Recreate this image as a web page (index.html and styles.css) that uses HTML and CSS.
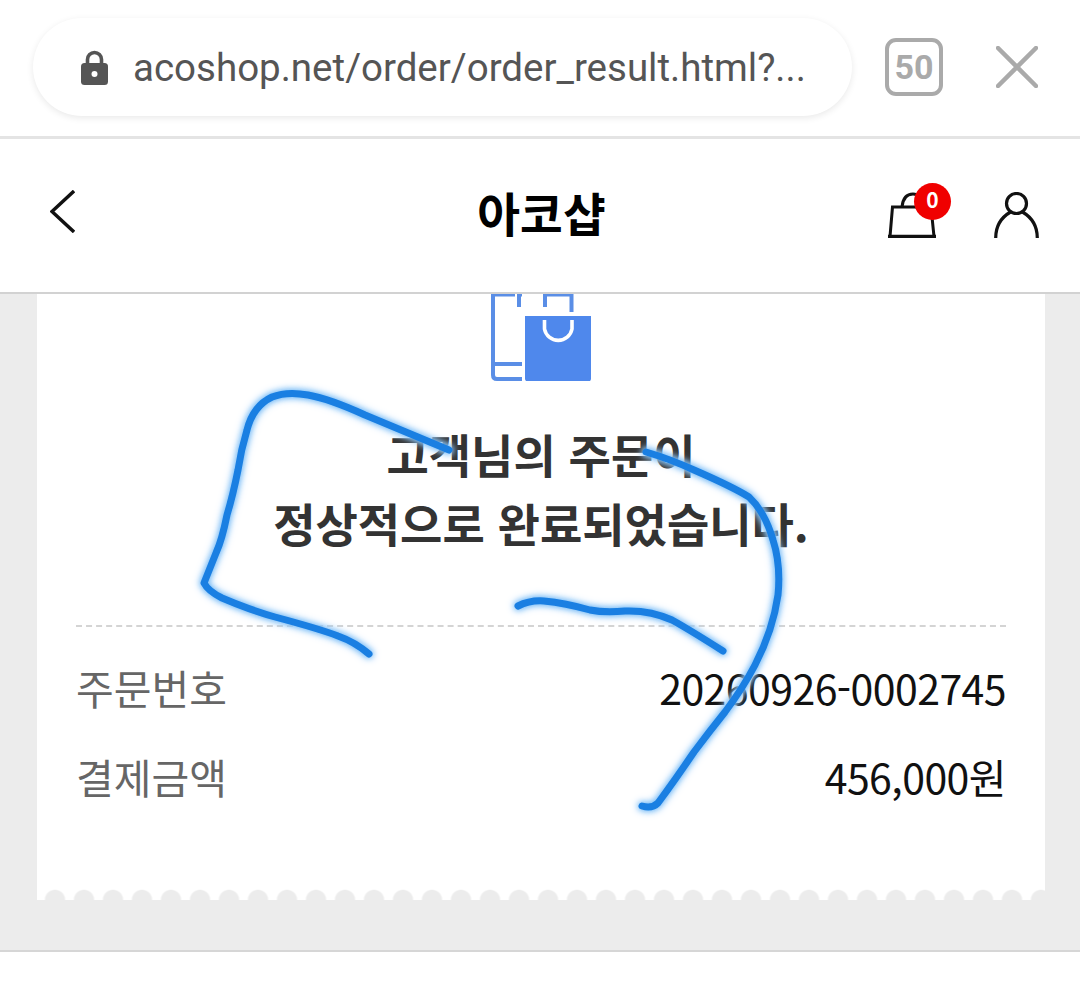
FILE: index.html
```html
<!DOCTYPE html>
<html lang="ko">
<head>
<meta charset="utf-8">
<title>아코샵</title>
<link rel="stylesheet" href="styles.css">
</head>
<body>
<div class="browser">
  <div class="url-pill">
    <svg class="lock" viewBox="0 0 27 35"><path d="M6.500 14V9.500a7 7 0 0 1 14 0V14" fill="none" stroke="#555" stroke-width="3.600"/><rect x="0" y="13" width="27" height="22" rx="3.500" fill="#555"/><circle cx="13.500" cy="24" r="3" fill="#fff"/></svg>
    <span class="url">acoshop.net/order/order_result.html?...</span>
  </div>
  <div class="tabs">50</div>
  <svg class="close" viewBox="0 0 42 42"><path d="M2 2 40 40M40 2 2 40" stroke="#aaa" stroke-width="4.500" stroke-linecap="round" fill="none"/></svg>
</div>
<header class="app-header">
  <svg class="back" viewBox="0 0 25 43"><path d="M24 1 2 21.500 24 42" fill="none" stroke="#111" stroke-width="3.400"/></svg>
  <h1 class="title">아코샵</h1>
  <div class="header-icons">
    <div class="cart">
      <svg class="cart-icon" viewBox="0 0 48 46"><path d="M2 44.500 4.500 15H43L46 44.500Z" fill="none" stroke="#111" stroke-width="3"/><path d="M0 44.500H48" stroke="#111" stroke-width="3.600"/><path d="M14 15C15 5 20 2 25 2 31 2 33 6 33 15" fill="none" stroke="#111" stroke-width="3"/></svg>
      <span class="badge">0</span>
    </div>
    <svg class="user" viewBox="0 0 45 46"><circle cx="22.500" cy="11.500" r="10" fill="none" stroke="#111" stroke-width="3.200"/><path d="M1.700 46C1.700 33 8 25 16.500 20M43.300 46C43.300 33 37 25 28.500 20" fill="none" stroke="#111" stroke-width="3.200"/></svg>
  </div>
</header>
<main class="stage">
  <section class="card">
    <svg class="order-icon" viewBox="0 0 101 87">
      <path d="M2 0V81Q2 85 6 85H31M2 70H31" fill="none" stroke="#5a8ee6" stroke-width="4"/>
      <path d="M0 1H24M26 1H31M52 1H82" fill="none" stroke="#5a8ee6" stroke-width="3"/>
      <path d="M28 0V13M54 0V13M80.500 0V18" fill="none" stroke="#5a8ee6" stroke-width="4"/>
      <path d="M34 22H100V84.500Q100 87.500 97 87.500H37Q34 87.500 34 84.500Z" fill="#4f88ec"/>
      <path d="M53.500 26V35A14 14 0 0 0 81 35V26" fill="none" stroke="#fff" stroke-width="3.600"/>
    </svg>
    <h2 class="message">고객님의 주문이<br>정상적으로 완료되었습니다.</h2>
    <dl class="details">
      <div class="row"><dt>주문번호</dt><dd>20260926-0002745</dd></div>
      <div class="row"><dt>결제금액</dt><dd>456,000원</dd></div>
    </dl>
    <div class="scallops"></div>
  </section>
</main>
<div class="footer"></div>
<svg class="scribble" viewBox="0 0 1080 1002">
  <path d="M449 450L365 415Q330 399 308 395Q287 391 272 397Q253 406 247 430Q241 450 238 470Q233 495 227 515Q222 540 216 553L204 583Q208 591 222 598Q250 610 275 617Q320 629 338 636Q355 642 369 654"/>
  <path d="M646 452Q670 459 694 470Q733 487 749 497Q765 512 773 540Q781 565 778 595Q773 630 755 665Q743 688 725 712Q709 732 694 752Q675 780 658 803Q652 809 642 806"/>
  <path d="M518 606Q530 600 544 601Q565 603 590 610Q605 613 625 611Q650 610 672 620Q690 630 723 651"/>
</svg>
</body>
</html>
```

FILE: styles.css
```css
* { box-sizing: border-box; }
html, body { margin: 0; padding: 0; }
body {
  width: 1080px;
  height: 1002px;
  overflow: hidden;
  background: #fff;
  position: relative;
  font-family: "Noto Sans CJK KR", "Noto Sans", sans-serif;
}
.browser {
  height: 139px;
  padding: 18px 42px 0 33px;
  display: flex;
  align-items: flex-start;
  border-bottom: 3px solid #e4e4e4;
}
.url-pill {
  width: 819px;
  height: 98px;
  border-radius: 49px;
  background: #fff;
  box-shadow: 0 2px 7px rgba(0, 0, 0, .09);
  display: flex;
  align-items: center;
  padding-left: 48px;
  gap: 25px;
}
.lock { width: 27px; height: 35px; flex: none; }
.url {
  font-family: Roboto, "Liberation Sans", sans-serif;
  font-size: 38.500px;
  color: #555;
  white-space: nowrap;
}
.tabs {
  width: 58px;
  height: 58px;
  margin: 20px 0 0 33px;
  border: 4px solid #aaa;
  border-radius: 11px;
  color: #aaa;
  font-family: Roboto, "Liberation Sans", sans-serif;
  font-weight: 700;
  font-size: 34px;
  display: flex;
  align-items: center;
  justify-content: center;
}
.close { width: 42px; height: 42px; margin: 28px 0 0 53px; flex: none; }
.app-header {
  height: 155px;
  border-bottom: 2px solid #d2d2d2;
  background: #fff;
  display: flex;
  align-items: center;
  justify-content: center;
  position: relative;
}
.back { position: absolute; left: 50px; top: 51px; width: 25px; height: 43px; }
.title {
  margin: 0 0 6px 3px;
  font-size: 46.500px;
  font-weight: 700;
  color: #000;
  line-height: 1;
}
.header-icons {
  position: absolute;
  left: 888px;
  top: 53px;
  display: flex;
  gap: 58px;
}
.cart { position: relative; width: 48px; height: 46px; }
.cart-icon { width: 48px; height: 46px; display: block; }
.badge {
  position: absolute;
  left: 26px;
  top: -9px;
  width: 37px;
  height: 37px;
  border-radius: 50%;
  background: #f00000;
  color: #fff;
  font-size: 21px;
  font-weight: 700;
  line-height: 33px;
  text-align: center;
}
.user { width: 45px; height: 46px; }
.stage {
  height: 658px;
  background: #ececec;
  border-bottom: 2px solid #d6d6d6;
  padding: 0 35px 0 37px;
}
.card {
  height: 606px;
  background: #fff;
  position: relative;
  display: flex;
  flex-direction: column;
  align-items: center;
}
.order-icon { width: 101px; height: 87px; display: block; flex: none; overflow: hidden; }
.message {
  margin: 38px 0 0;
  font-size: 46px;
  font-weight: 700;
  color: #333;
  text-align: center;
  line-height: 69px;
}
.details {
  margin: 68px 0 0;
  width: 930px;
  border-top: 2px dashed #d4d4d4;
  padding-top: 15px;
  font-size: 41px;
}
.row {
  height: 89px;
  display: flex;
  justify-content: space-between;
  align-items: center;
}
.row dt { color: #666; }
.row dd { margin: 0; color: #111; letter-spacing: -.55px; }
.scallops {
  position: absolute;
  left: 0;
  right: 0;
  bottom: 0;
  height: 11px;
  background-image: radial-gradient(circle at 50% 100%, #ececec 9.500px, transparent 10.800px);
  background-size: 29px 11px;
  background-position: 3.500px 0;
  background-repeat: repeat-x;
}
.footer { height: 50px; background: #fff; }
.scribble {
  position: absolute;
  left: 0;
  top: 0;
  width: 1080px;
  height: 1002px;
  pointer-events: none;
}
.scribble path {
  fill: none;
  stroke: #1a7fe2;
  stroke-width: 7;
  stroke-linecap: round;
  stroke-linejoin: round;
  filter: drop-shadow(0 0 3px #6cb6f6) drop-shadow(0 0 3px #a9d4fa);
}
```
